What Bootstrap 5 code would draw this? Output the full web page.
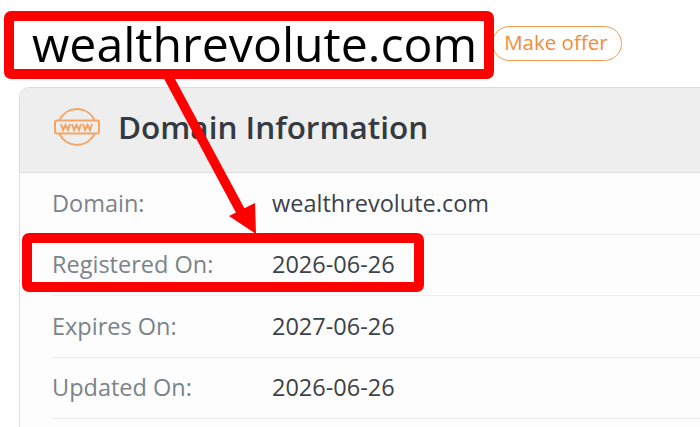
<!DOCTYPE html>
<html lang="en"><head><meta charset="utf-8">
<link href="https://cdn.jsdelivr.net/npm/bootstrap@5.3.0/dist/css/bootstrap.min.css" rel="stylesheet">
<style>
html,body{height:427px;overflow:hidden;background:#fff;}
body{font-family:"Open Sans",sans-serif;position:relative;}
.top-line{height:87px;padding-left:32px;}
.domain-name{font-size:48.200px;color:#000;line-height:1;margin:0;font-weight:400;}
.offer-pill{margin-left:15px;font-size:20.500px;color:#f48c38;border:1.500px solid #f39a50;border-radius:18px;height:35px;line-height:31px;padding:0 13px 0 11px;margin-top:-1px;}
.info-box{margin-left:19px;height:340px;border:1px solid #ddd;border-width:1px 0 0 1px;border-radius:10px 0 0 0;background:#fdfdfd;}
.info-head{height:85px;background:#eee;border-bottom:1px solid #ddd;border-radius:10px 0 0 0;padding:0 0 6px 34px;gap:18px;}
.info-head h2{font-size:31.500px;font-weight:600;color:#343a40;margin:0;}
.info-row{height:61.600px;margin-left:32px;border-bottom:1px solid #eee;font-size:23.500px;}
.info-key{width:220px;color:#7b838a;}
.info-val{color:#3c4248;}
.marks{position:absolute;left:0;top:0;pointer-events:none;}
</style></head><body>
<div class="top-line d-flex align-items-center">
  <h1 class="domain-name">wealthrevolute.com</h1>
  <span class="offer-pill">Make offer</span>
</div>
<div class="info-box">
  <div class="info-head d-flex align-items-center">
    <svg width="46" height="40" viewBox="0 0 46 40" fill="none" stroke="#f4a566" stroke-width="2"><path d="M5.500 13A19.500 19.500 0 0 1 40.500 13M5.500 27A19.500 19.500 0 0 0 40.500 27"/><rect x="1" y="13.500" width="44" height="13" rx="2"/><path d="M7 17l2 6 2.500-5 2.500 5 2-6M18 17l2 6 2.500-5 2.500 5 2-6M29 17l2 6 2.500-5 2.500 5 2-6" stroke-width="2"/></svg>
    <h2>Domain Information</h2>
  </div>
  <div class="info-row d-flex align-items-center"><div class="info-key">Domain:</div><div class="info-val">wealthrevolute.com</div></div>
  <div class="info-row d-flex align-items-center"><div class="info-key">Registered On:</div><div class="info-val">2026-06-26</div></div>
  <div class="info-row d-flex align-items-center"><div class="info-key">Expires On:</div><div class="info-val">2027-06-26</div></div>
  <div class="info-row d-flex align-items-center"><div class="info-key">Updated On:</div><div class="info-val">2026-06-26</div></div>
</div>
<svg class="marks" width="700" height="427" viewBox="0 0 700 427" fill="none" stroke="#f00" stroke-width="10">
  <rect x="9" y="16" width="480" height="58" rx="2"/>
  <rect x="27" y="238" width="392" height="49" rx="2"/>
  <path d="M168 76L241 212" stroke-width="9.500"/>
  <path d="M229 216L255 203L256 234Z" fill="#f00" stroke="none"/>
</svg>
<script src="https://cdn.jsdelivr.net/npm/bootstrap@5.3.0/dist/js/bootstrap.bundle.min.js"></script>
</body></html>
